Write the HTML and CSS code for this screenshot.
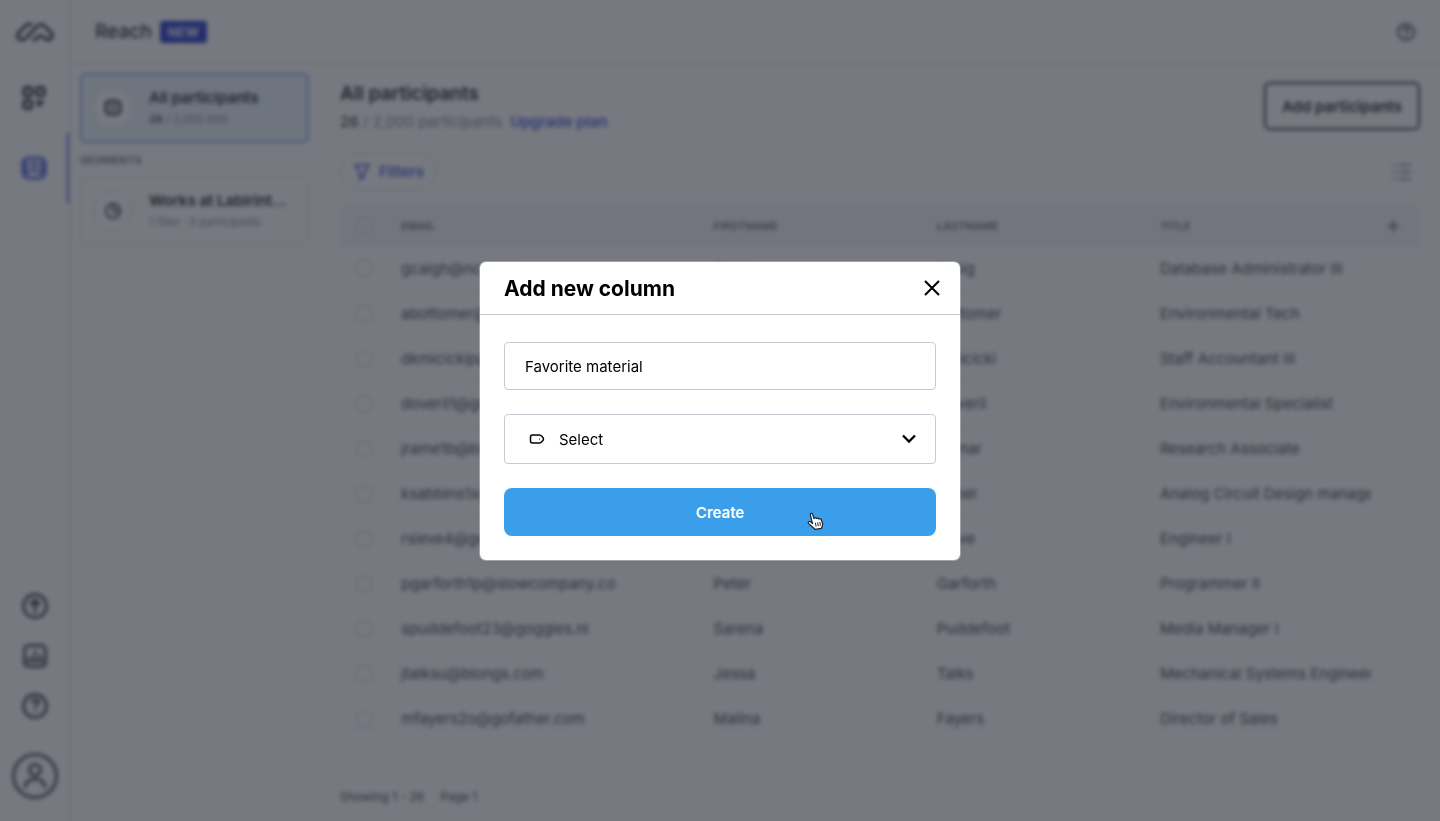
FILE: index.html
```html
<!DOCTYPE html>
<html lang="en">
<head>
    <meta charset="UTF-8">
    <meta name="viewport" content="width=device-width, initial-scale=1.0">
    <title>Reach</title>
    <link rel="stylesheet" href="styles.css">
</head>
<body>

    <div class="app">
        <nav class="rail">
            <a class="rail-logo" href="#" aria-label="Home">
                <svg width="40" height="24" viewBox="0 0 40 24" fill="none" stroke="currentColor" stroke-width="3" stroke-linecap="round" stroke-linejoin="round">
                    <path d="M16 4.500C14 3.500 12.500 4 11 5.500L4 12.500C0.500 16.500 4.500 21 8.500 19.500C10 19 11 18 12 17L22 6.500C24.500 4 27.500 4 30 6.500L36 12.500C39 16 36 20.500 32 19.500C30 19 29 17 27 16C25.500 15.300 24 16 22.500 17.500C21 19 20 20 18.500 20"/>
                </svg>
            </a>
            <a class="rail-item" href="#" aria-label="Projects">
                <svg width="26" height="26" viewBox="0 0 26 26" fill="none" stroke="currentColor" stroke-width="3">
                    <rect x="3" y="2.500" width="7.500" height="8" rx="2"/>
                    <rect x="15.500" y="2.500" width="7.500" height="8" rx="2"/>
                    <rect x="3" y="15.500" width="7.500" height="8" rx="2"/>
                    <path d="M15 16h8l-5 6z" fill="currentColor" stroke-width="1"/>
                </svg>
            </a>
            <a class="rail-item active" href="#" aria-label="Reach">
                <svg width="26" height="24" viewBox="0 0 26 24" fill="none" stroke="currentColor" stroke-width="3">
                    <rect x="2" y="2" width="22" height="20" rx="5"/>
                    <circle cx="13" cy="9" r="3" stroke-width="2"/>
                    <path d="M7 18c1-4 11-4 12 0" stroke-width="2"/>
                    <path d="M5 5v14M21 5v14" stroke-width="3"/>
                </svg>
            </a>
            <div class="rail-bottom">
                <a href="#" aria-label="Upgrade">
                    <svg width="26" height="26" viewBox="0 0 26 26" fill="none" stroke="currentColor" stroke-width="2.500">
                        <circle cx="13" cy="13" r="11.500"/>
                        <path d="M13 20V7M8 12l5-5 5 5"/>
                    </svg>
                </a>
                <a href="#" aria-label="Reports">
                    <svg width="26" height="26" viewBox="0 0 26 26" fill="none" stroke="currentColor" stroke-width="2.500">
                        <rect x="2.500" y="2.500" width="21" height="21" rx="4"/>
                        <path d="M8 18v-5M13 18V7M18 18v-7M4 18h18" stroke-width="2"/>
                    </svg>
                </a>
                <a href="#" aria-label="Help">
                    <svg width="26" height="26" viewBox="0 0 26 26" fill="none" stroke="currentColor" stroke-width="2.500">
                        <circle cx="13" cy="13" r="11.500"/>
                        <path d="M10 9.500c0-4 6.500-3.500 6.500-.5 0 2.500-3.500 2.500-3.500 5.500M13 17v2"/>
                    </svg>
                </a>
                <a class="avatar" href="#" aria-label="Account">
                    <svg width="46" height="46" viewBox="0 0 46 46" fill="none" stroke="currentColor" stroke-width="2.500">
                        <circle cx="23" cy="23" r="21.500"/>
                        <circle cx="23" cy="17" r="5.500"/>
                        <path d="M13 35c0-12 20-12 20 0"/>
                    </svg>
                </a>
            </div>
        </nav>

        <div class="page">
            <header class="topbar">
                <h1>Reach</h1>
                <span class="badge">NEW</span>
                <button class="help-btn" aria-label="Help">
                    <svg width="18" height="18" viewBox="0 0 18 18" fill="none" stroke="currentColor" stroke-width="2">
                        <circle cx="9" cy="9" r="8"/>
                        <path d="M6.500 7c0-3 5-2.500 5-.5 0 2-2.500 2-2.500 4M9 12v2"/>
                    </svg>
                </button>
            </header>

            <div class="content">
                <aside class="segments">
                    <a class="segment selected" href="#">
                        <span class="segment-icon">
                            <svg width="18" height="18" viewBox="0 0 18 18" fill="none" stroke="currentColor" stroke-width="3">
                                <rect x="2" y="2" width="14" height="13" rx="4"/>
                                <path d="M5 7h8M7 11h4" stroke-width="2"/>
                            </svg>
                        </span>
                        <span class="segment-text">
                            <span class="segment-name">All participants</span>
                            <span class="segment-meta"><b>26</b> / 2,000 limit</span>
                        </span>
                    </a>
                    <h2 class="segments-title">SEGMENTS</h2>
                    <a class="segment" href="#">
                        <span class="segment-icon">
                            <svg width="18" height="18" viewBox="0 0 18 18" fill="none" stroke="currentColor" stroke-width="2">
                                <circle cx="9" cy="9" r="7"/>
                                <path d="M9 2v7h7"/>
                            </svg>
                        </span>
                        <span class="segment-text">
                            <span class="segment-name">Works at Labirint...</span>
                            <span class="segment-meta">1 filter · 0 participants</span>
                        </span>
                    </a>
                </aside>

                <main class="main">
                    <div class="main-header">
                        <div>
                            <h2>All participants</h2>
                            <p><b>26</b> / 2,000 participants <a href="#">Upgrade plan</a></p>
                        </div>
                        <button class="add-btn">Add participants</button>
                    </div>

                    <div class="toolbar">
                        <button class="filter-btn">
                            <svg width="18" height="18" viewBox="0 0 18 18" fill="none" stroke="currentColor" stroke-width="2" stroke-linejoin="round">
                                <path d="M2 2h14l-5 8v4l-4 2v-6z"/>
                            </svg>
                            Filters
                        </button>
                        <button class="list-btn" aria-label="Columns">
                            <svg width="20" height="18" viewBox="0 0 20 18" fill="none" stroke="currentColor" stroke-width="2">
                                <path d="M1 2h3M1 9h3M1 16h3M7 2h12M7 9h12M7 16h12"/>
                            </svg>
                        </button>
                    </div>

                    <div class="table-wrap">
                        <table>
                            <colgroup>
                                <col class="col-check">
                                <col class="col-email">
                                <col class="col-name">
                                <col class="col-name">
                                <col>
                                <col class="col-add">
                            </colgroup>
                            <thead>
                                <tr>
                                    <th><input type="checkbox" aria-label="Select all"></th>
                                    <th>EMAIL</th>
                                    <th>FIRSTNAME</th>
                                    <th>LASTNAME</th>
                                    <th>TITLE</th>
                                    <th>
                                        <button class="plus-btn" aria-label="Add column">
                                            <svg width="14" height="14" viewBox="0 0 14 14" stroke="currentColor" stroke-width="2">
                                                <path d="M7 1v12M1 7h12"/>
                                            </svg>
                                        </button>
                                    </th>
                                </tr>
                            </thead>
                            <tbody>
                                <tr><td><input type="checkbox" aria-label="Select row"></td><td>gcaigh@nc.com</td><td>Greg</td><td>Craig</td><td>Database Administrator III</td><td></td></tr>
                                <tr><td><input type="checkbox" aria-label="Select row"></td><td>abottomer@goggles.nl</td><td>Anna</td><td>Bottomer</td><td>Environmental Tech</td><td></td></tr>
                                <tr><td><input type="checkbox" aria-label="Select row"></td><td>dkmicickip@blongs.com</td><td>Dana</td><td>Kmicicki</td><td>Staff Accountant III</td><td></td></tr>
                                <tr><td><input type="checkbox" aria-label="Select row"></td><td>doveril1@goggles.nl</td><td>Doris</td><td>Doveril</td><td>Environmental Specialist</td><td></td></tr>
                                <tr><td><input type="checkbox" aria-label="Select row"></td><td>jrame1b@blongs.com</td><td>John</td><td>Ramar</td><td>Research Associate</td><td></td></tr>
                                <tr><td><input type="checkbox" aria-label="Select row"></td><td>ksabbins1x@blongs.com</td><td>Kim</td><td>Sabel</td><td>Analog Circuit Design manager</td><td></td></tr>
                                <tr><td><input type="checkbox" aria-label="Select row"></td><td>rsieve4@gofather.com</td><td>Rose</td><td>Sieve</td><td>Engineer I</td><td></td></tr>
                                <tr><td><input type="checkbox" aria-label="Select row"></td><td>pgarforth1p@slowcompany.co</td><td>Peter</td><td>Garforth</td><td>Programmer II</td><td></td></tr>
                                <tr><td><input type="checkbox" aria-label="Select row"></td><td>spuddefoot23@goggles.nl</td><td>Sarena</td><td>Puddefoot</td><td>Media Manager I</td><td></td></tr>
                                <tr><td><input type="checkbox" aria-label="Select row"></td><td>jtalksu@blongs.com</td><td>Jessa</td><td>Talks</td><td>Mechanical Systems Engineer</td><td></td></tr>
                                <tr><td><input type="checkbox" aria-label="Select row"></td><td>mfayers2o@gofather.com</td><td>Malina</td><td>Fayers</td><td>Director of Sales</td><td></td></tr>
                            </tbody>
                        </table>
                    </div>

                    <footer class="pager">
                        <span>Showing 1 - 26</span>
                        <span>Page 1</span>
                    </footer>
                </main>
            </div>
        </div>
    </div>

    <div class="overlay">
        <form class="modal" role="dialog" aria-labelledby="modal-title">
            <div class="modal-header">
                <h2 id="modal-title">Add new column</h2>
                <button type="button" class="close-btn" aria-label="Close">
                    <svg width="16" height="16" viewBox="0 0 16 16" stroke="currentColor" stroke-width="2">
                        <path d="M1 1l14 14M15 1L1 15"/>
                    </svg>
                </button>
            </div>
            <div class="modal-body">
                <input class="name-input" type="text" value="Favorite material" aria-label="Column name">
                <div class="select-field">
                    <svg class="tag-icon" width="16" height="10" viewBox="0 0 16 10" fill="none" stroke="currentColor" stroke-width="1.500" stroke-linejoin="round">
                        <path d="M3.500 1h7c1.500 0 4 2.500 4 4s-2.500 4-4 4h-7c-1.200 0-2-.8-2-2V3c0-1.200.8-2 2-2z"/>
                        <circle cx="10.500" cy="5" r=".6" fill="currentColor" stroke="none"/>
                    </svg>
                    <select aria-label="Column type">
                        <option>Select</option>
                    </select>
                    <svg class="chevron" width="14" height="10" viewBox="0 0 14 10" fill="none" stroke="currentColor" stroke-width="2.300">
                        <path d="M1 1.500l6 6 6-6"/>
                    </svg>
                </div>
                <button type="submit" class="create-btn">
                    Create
                    <svg class="pointer" width="17" height="18" viewBox="0 0 17 18" fill="#fff" stroke="#222" stroke-width="1.200" stroke-linejoin="round">
                        <path d="M5 9.600L3.400 3.200C3 1.200 5 .6 5.600 2.400L7 6.600C7.300 5.500 8.900 5.400 9.300 6.500 9.900 5.800 11.300 6 11.700 7 12.600 6.400 14 6.800 14.400 8L15.500 11.500C16 13.500 14.800 14.500 14.500 16.300L8 17.400C7 15.500 4 14 1.600 11.600.6 10.300 2.200 8.900 3.400 9.800L5.600 11.600z"/>
                        <path d="M8.400 10.800l.7 3.700M10.600 10.400l.7 3.700M12.800 10l.6 3.700" stroke-width="1"/>
                    </svg>
                </button>
            </div>
        </form>
    </div>

</body>
</html>
```

FILE: styles.css
```css
* {
    box-sizing: border-box;
}

body {
    font-family: Inter, "Liberation Sans", sans-serif;
    font-size: 15px;
    margin: 0;
    color: #2e2d38;
    background-color: #fff;
    overflow: hidden;
}

h1, h2, p {
    margin: 0;
}

a {
    color: inherit;
    text-decoration: none;
}

button {
    font-family: inherit;
    color: inherit;
    background: none;
    border: none;
    padding: 0;
    cursor: pointer;
}

svg {
    display: block;
}

.app {
    display: flex;
    height: 100vh;
}

/* Left rail */
.rail {
    width: 70px;
    display: flex;
    flex-direction: column;
    align-items: center;
    border-right: 1px solid #e1e0ee;
    color: #34333d;
}

.rail-logo {
    height: 63px;
    display: flex;
    align-items: center;
}

.rail-item {
    width: 100%;
    height: 70px;
    display: flex;
    align-items: center;
    justify-content: center;
    border-right: 2px solid transparent;
}

.rail-item.active {
    color: #5069e0;
    border-right-color: #5069e0;
}

.rail-bottom {
    margin-top: auto;
    margin-bottom: 22px;
    display: flex;
    flex-direction: column;
    align-items: center;
    gap: 24px;
}

.avatar {
    margin-top: 10px;
}

/* Top bar */
.page {
    flex: 1;
    min-width: 0;
    display: flex;
    flex-direction: column;
}

.topbar {
    height: 64px;
    display: flex;
    align-items: center;
    gap: 8px;
    padding: 0 25px;
    border-bottom: 1px solid #e1e0ee;
}

.topbar h1 {
    font-size: 19px;
    font-weight: 500;
    color: #2e2d38;
}

.badge {
    padding: 0 8px;
    line-height: 22px;
    font-size: 13px;
    font-weight: 700;
    color: #e4e8ff;
    background-color: #3044cc;
    border-radius: 3px;
}

.help-btn {
    margin-left: auto;
    color: #4b4a56;
}

.content {
    flex: 1;
    display: flex;
    min-height: 0;
}

/* Segments */
.segments {
    width: 254px;
    padding: 9px 14px 0 10px;
    border-right: 1px solid #fbfafd;
}

.segment {
    display: flex;
    align-items: center;
    gap: 16px;
    height: 68px;
    padding: 0 12px;
    border: 1px solid #e4e3f0;
    border-radius: 6px;
}

.segment.selected {
    height: 70px;
    background-color: #e9f5fd;
    border: 2px solid #a0aff0;
    padding: 0 11px;
}

.segment-icon {
    width: 40px;
    height: 40px;
    display: flex;
    align-items: center;
    justify-content: center;
    border: 1px solid #e4e3f0;
    border-radius: 50%;
    color: #4b4a56;
}

.selected .segment-icon {
    background-color: #fff;
}

.segment-text {
    display: flex;
    flex-direction: column;
    gap: 4px;
    white-space: nowrap;
}

.segment-name {
    font-size: 15px;
    line-height: 18px;
    font-weight: 600;
    color: #2e2d38;
}

.segment-meta {
    font-size: 11px;
    line-height: 16px;
    color: #8d8c9e;
}

.segment-meta b {
    font-weight: 600;
    color: #4b4a56;
}

.segments-title {
    margin: 11px 0;
    font-size: 11px;
    line-height: 12px;
    font-weight: 600;
    color: #77768a;
}

/* Main area */
.main {
    flex: 1;
    min-width: 0;
    display: flex;
    flex-direction: column;
    padding: 18px 20px 16px 16px;
}

.main-header {
    display: flex;
    justify-content: space-between;
    align-items: flex-start;
}

.main-header h2 {
    font-size: 19px;
    line-height: 24px;
    font-weight: 600;
    color: #2e2d38;
}

.main-header p {
    margin-top: 4px;
    font-size: 15px;
    line-height: 24px;
    color: #8d8c9e;
}

.main-header p b {
    font-weight: 500;
    color: #4b4a56;
}

.main-header p a {
    margin-left: 4px;
    font-weight: 600;
    color: #5069e0;
}

.add-btn {
    height: 48px;
    padding: 0 16px;
    font-size: 15px;
    font-weight: 600;
    color: #2e2d38;
    border: 2px solid #34333d;
    border-radius: 6px;
}

.toolbar {
    display: flex;
    align-items: center;
    justify-content: space-between;
    margin: 19px 0 15px;
    padding-right: 8px;
}

.filter-btn {
    display: flex;
    align-items: center;
    gap: 8px;
    height: 37px;
    padding: 0 12px;
    font-size: 15px;
    font-weight: 600;
    color: #5069e0;
    border: 1px solid #e1e0ee;
    border-radius: 20px;
}

.list-btn {
    color: #8d8c9e;
}

/* Table */
.table-wrap {
    height: 525px;
    overflow: hidden;
    border: 1px solid #eeedf5;
    border-radius: 8px;
}

table {
    width: 100%;
    table-layout: fixed;
    border-collapse: collapse;
}

.col-check {
    width: 60px;
}

.col-email {
    width: 29%;
}

.col-name {
    width: 20.7%;
}

.col-add {
    width: 48px;
}

th {
    height: 40px;
    padding: 0;
    text-align: left;
    font-size: 11px;
    font-weight: 600;
    color: #77768a;
    background-color: #f5f4fa;
}

td {
    height: 45px;
    padding: 0;
    font-size: 15px;
    color: #4b4a56;
    white-space: nowrap;
    overflow: hidden;
    border-bottom: 1px solid #eeedf5;
}

td input, th input {
    appearance: none;
    display: block;
    width: 16px;
    height: 16px;
    margin: 0 0 0 15px;
    border: 1px solid #d6d5e2;
    border-radius: 4px;
}

.plus-btn {
    display: block;
    margin-left: 15px;
}

.pager {
    display: flex;
    gap: 16px;
    margin-top: auto;
    font-size: 12px;
    line-height: 16px;
    color: #4b4a56;
}

/* Modal */
.overlay {
    position: fixed;
    inset: 0;
    display: flex;
    align-items: center;
    justify-content: center;
    padding-top: 1px;
    background-color: rgba(28, 32, 44, 0.6);
    backdrop-filter: blur(2px);
}

.modal {
    width: 480px;
    max-width: 100%;
    color: #000;
    background-color: #fff;
    border-radius: 6px;
    box-shadow: 0 0 0 1px rgba(255, 255, 255, 0.3);
}

.modal-header {
    display: flex;
    align-items: center;
    justify-content: space-between;
    height: 53px;
    padding: 0 20px 0 24px;
    border-bottom: 1px solid #c9c9d6;
}

.modal-header h2 {
    font-size: 21px;
    font-weight: 700;
}

.modal-body {
    display: flex;
    flex-direction: column;
    gap: 24px;
    padding: 27px 24px 24px;
}

.name-input {
    width: 100%;
    height: 48px;
    padding: 0 20px;
    font-family: inherit;
    font-size: 15px;
    color: #000;
    border: 1px solid #c9c9d6;
    border-radius: 4px;
    outline: none;
}

.select-field {
    position: relative;
    display: flex;
}

.select-field select {
    appearance: none;
    width: 100%;
    height: 50px;
    padding: 0 54px;
    font-family: inherit;
    font-size: 15px;
    color: #000;
    background-color: transparent;
    border: 1px solid #c9c9d6;
    border-radius: 4px;
    outline: none;
}

.tag-icon {
    position: absolute;
    left: 25px;
    top: 20px;
}

.chevron {
    position: absolute;
    right: 20px;
    top: 20px;
    pointer-events: none;
}

.create-btn {
    position: relative;
    height: 48px;
    font-size: 15px;
    font-weight: 600;
    color: #fff;
    background-color: #3b9eea;
    border-radius: 8px;
}

.pointer {
    position: absolute;
    right: 112px;
    top: 24px;
}
```
